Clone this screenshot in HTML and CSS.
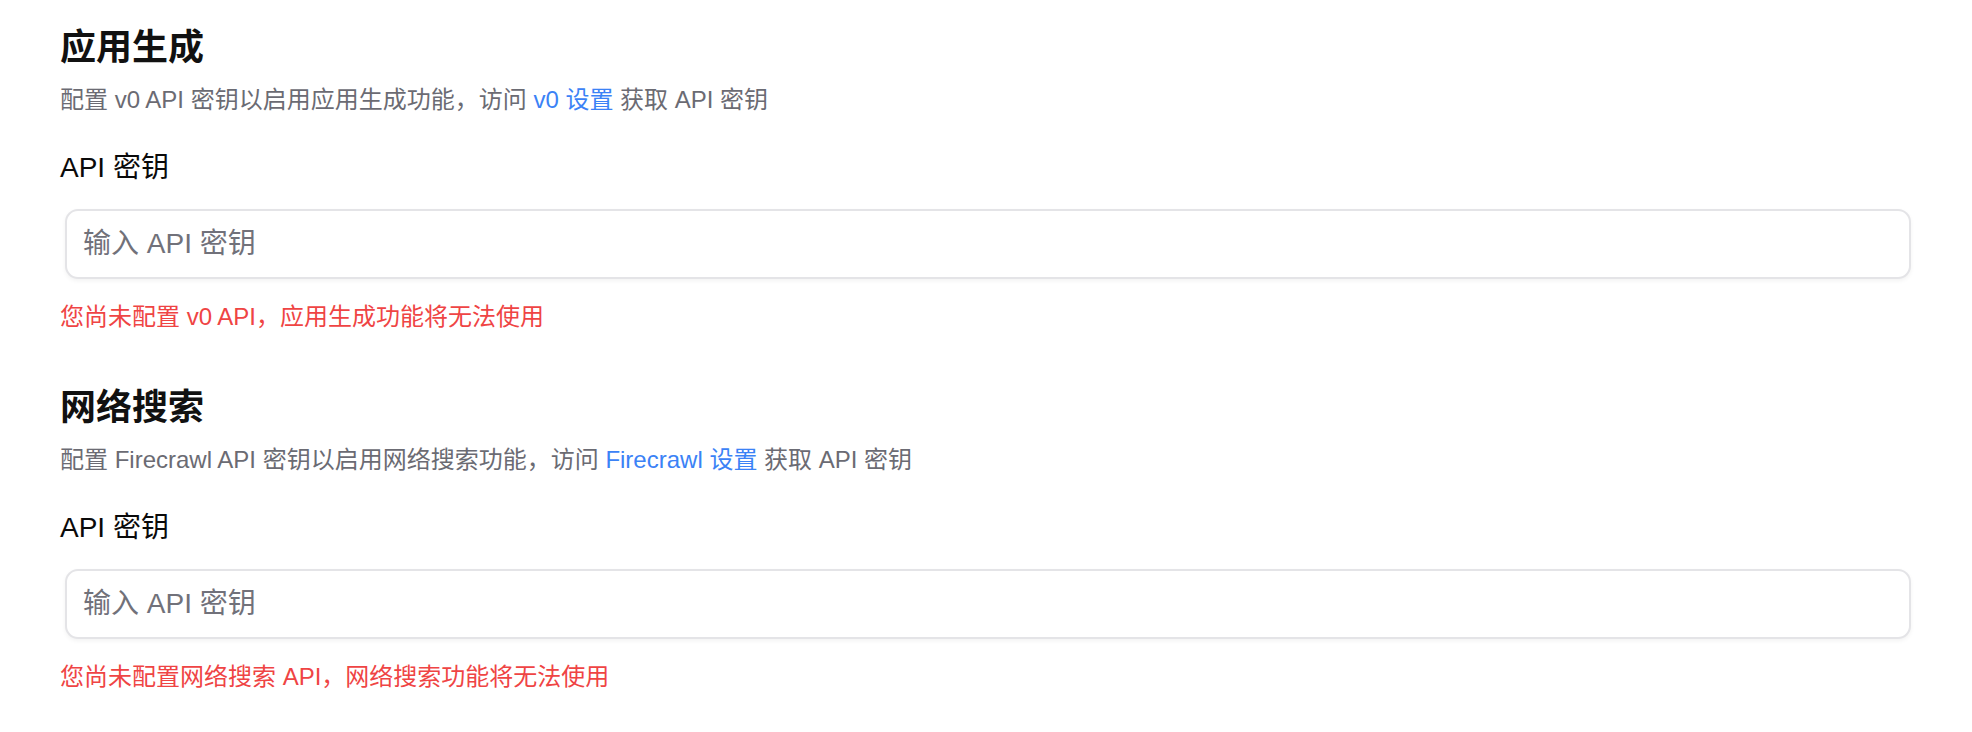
FILE: index.html
```html
<!DOCTYPE html>
<html lang="zh-CN">
<head>
<meta charset="utf-8">
<title>设置</title>
<link rel="stylesheet" href="styles.css">
</head>
<body>
<main class="page">
  <section class="section">
    <h2 class="title">应用生成</h2>
    <p class="desc">配置 v0 API 密钥以启用应用生成功能，访问 <a class="link" href="#">v0 设置</a> 获取 API 密钥</p>
    <label class="label" for="v0key">API 密钥</label>
    <div class="field">
      <input id="v0key" class="input" type="password" placeholder="输入 API 密钥">
    </div>
    <p class="error">您尚未配置 v0 API，应用生成功能将无法使用</p>
  </section>
  <section class="section">
    <h2 class="title">网络搜索</h2>
    <p class="desc">配置 Firecrawl API 密钥以启用网络搜索功能，访问 <a class="link" href="#">Firecrawl 设置</a> 获取 API 密钥</p>
    <label class="label" for="fckey">API 密钥</label>
    <div class="field">
      <input id="fckey" class="input" type="password" placeholder="输入 API 密钥">
    </div>
    <p class="error">您尚未配置网络搜索 API，网络搜索功能将无法使用</p>
  </section>
</main>
</body>
</html>
```
FILE: styles.css
```css
* { box-sizing: border-box; }
html, body { margin: 0; padding: 0; background: #ffffff; }
body {
  font-family: "Liberation Sans", "Noto Sans CJK SC", sans-serif;
  color: #0a0a0a;
}
.page {
  padding: 20px 56px 0 60px;
  display: flex;
  flex-direction: column;
  gap: 47px;
}
.section {
  display: flex;
  flex-direction: column;
}
.title {
  margin: 0;
  font-size: 36px;
  line-height: 56px;
  font-weight: 700;
  color: #111111;
}
.desc {
  margin: 8px 0 0;
  font-size: 24px;
  line-height: 32px;
  color: #6b6b73;
}
.link { color: #3b82f6; text-decoration: none; }
.label {
  margin-top: 32px;
  font-size: 28px;
  line-height: 40px;
  color: #0a0a0a;
}
.field {
  margin-top: 21px;
  padding: 0 5px;
}
.input {
  display: block;
  width: 100%;
  height: 70px;
  padding: 0 16px;
  border: 2px solid #e4e4e7;
  border-radius: 13px;
  background: #ffffff;
  box-shadow: 0 2px 4px rgba(0,0,0,0.05);
  font-family: "Liberation Sans", "Noto Sans CJK SC", sans-serif;
  font-size: 28px;
  color: #0a0a0a;
  outline: none;
}
.input::placeholder { color: #71717a; }
.error {
  margin: 22px 0 0;
  font-size: 24px;
  line-height: 32px;
  color: #ef4444;
}
```
